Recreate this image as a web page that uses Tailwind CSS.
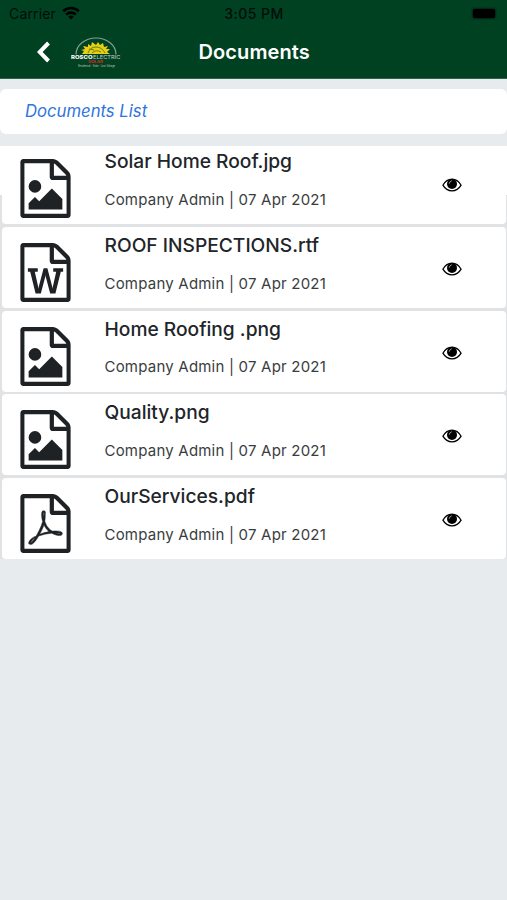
<!DOCTYPE html>
<html lang="en">
<head>
<meta charset="utf-8">
<title>Documents</title>
<script src="https://cdn.jsdelivr.net/npm/@tailwindcss/browser@4"></script>
</head>
<body class="bg-[#e8ebee] w-[507px] h-[900px] overflow-hidden font-[Inter,sans-serif] text-[#212529]">
<svg class="hidden">
  <symbol id="sheet" viewBox="128 0 1536 1792"><path d="M1596 380q28 28 48 76t20 88v1152q0 40-28 68t-68 28h-1344q-40 0-68-28t-28-68v-1600q0-40 28-68t68-28h896q40 0 88 20t76 48zm-444-244v376h376q-10-29-22-41l-313-313q-12-12-41-22zm384 1528v-1024h-416q-40 0-68-28t-28-68v-416h-768v1536h1280z"/></symbol>
  <symbol id="image" viewBox="128 0 1536 1792"><use href="#sheet" x="128" width="1536" height="1792"/><path d="M1408 1216v320h-1024v-192l192-192 128 128 384-384zm-832-192q-80 0-136-56t-56-136 56-136 136-56 136 56 56 136-56 136-136 56z"/></symbol>
  <symbol id="word" viewBox="128 0 1536 1792"><use href="#sheet" x="128" width="1536" height="1792"/><path d="M361 768v107h70l164 661h159l128-485q7-20 10-46 2-16 2-24h4l3 24q1 3 3.500 20t5.500 26l128 485h159l164-661h70v-107h-300v107h90l-99 438q-5 20-7 46l-2 21h-4q0-3-.5-6.500t-1.500-8-1-6.500q-1-5-4-21t-5-25l-144-545h-114l-144 545q-2 9-4.500 24.500t-3.500 21.500l-4 21h-4l-2-21q-2-26-7-46l-99-438h90v-107h-300z"/></symbol>
  <symbol id="pdf" viewBox="128 0 1536 1792"><use href="#sheet" x="128" width="1536" height="1792"/><path stroke="#1e2225" stroke-width="14" d="M1022 1071q33 26 84 56 59-7 117-7 147 0 177 49 16 22 2 52 0 1-1 2l-2 2v1q-6 38-71 38-48 0-115-20t-130-53q-221 24-392 83-153 262-242 262-15 0-28-7l-24-12q-1-1-6-5-10-10-6-36 9-40 56-91.500t132-96.500q14-9 23 6 2 2 2 4 52-85 107-197 68-136 104-262-24-82-30.500-159.500t6.500-127.500q11-40 42-40h22q23 0 35 15 18 21 9 68-2 6-4 8 1 3 1 8v30q-2 123-14 192 55 164 146 238zm-576 411q52-24 137-158-51 40-87.500 84t-49.500 74zm398-920q-15 42-2 132 1-7 7-44 0-3 7-43 1-4 4-8-1-1-1-2-1-2-1-3-1-22-13-36 0 1-1 2v2zm-124 661q135-54 284-81-2-1-13-9.500t-16-13.500q-76-67-127-176-27 86-83 197-30 56-45 83zm646-16q-24-24-140-24 76 28 124 28 14 0 18-1 0-1-2-3z"/></symbol>
  <symbol id="eye" viewBox="0 0 20 14"><path d="M.9 7.200Q4.300 1.100 10 1.100t9.100 6.100Q15.700 12.900 10 12.900T.9 7.200z" fill="none" stroke="#000" stroke-width="1.300"/><circle cx="10" cy="5.900" r="5"/><path d="M7.300 5.300q.3-2 2.100-2.500" fill="none" stroke="#aaa" stroke-width=".9" stroke-linecap="round"/></symbol>
</svg>

<header class="bg-[#004122] h-[79px] border-b border-[#2f6349]">
  <div class="grid grid-cols-3 h-[27px] items-center px-[9px] text-[14px] leading-[27px] text-black/80">
    <div class="flex items-center gap-[6px]"><span class="tracking-[0.150px]">Carrier</span>
      <svg class="w-[18px] h-[14px] -mt-[2px]" viewBox="0 0 18 14" fill="none" stroke="#000" stroke-width="2.600"><path d="M1.200 5.200a11.200 11.200 0 0 1 15.600 0M4.200 8.600a6.900 6.900 0 0 1 9.600 0"/><path d="M9 13.500l-2.600-2.700a3.800 3.800 0 0 1 5.200 0z" fill="#000" stroke="none"/></svg>
    </div>
    <div class="text-center font-medium tracking-[0.450px] text-[14px] pl-px">3:05 PM</div>
    <div class="justify-self-end w-[22px] h-[9px] rounded-[2px] bg-black mr-[3px] -mt-[1px] shadow-[0_0_2px_1px_#00000080]"></div>
  </div>
  <div class="flex items-center h-[51px]">
    <svg class="ml-[37px] w-[13px] h-[22px] -mt-[1px]" viewBox="0 0 13 22" fill="none" stroke="#fff" stroke-width="4"><path d="M11.500 2L2.700 11l8.800 9"/></svg>
    <svg class="ml-[21px] w-[52px] h-[32px]" viewBox="0 0 52 32">
      <path d="M5 17.500A20 16.500 0 0 1 45 17.500" fill="none" stroke="#7d9f98" stroke-width="1.200"/>
      <path d="M11 17l2-3-3-1 4-1-2-3 5 1 0-3 3 2 1-4 4 3 2-3 2 3 3-2 1 4 4-1-2 3 4 0-3 3 3 2z" fill="#e7cf16"/>
      <path d="M17 16q2-6 8-6t9 6M21 16q4-4 9-1M18 12l5 1" fill="none" stroke="#6b7d12" stroke-width="1"/>
      <text y="21.800" font-size="5.200" font-weight="800" fill="#fff" textLength="21.500" lengthAdjust="spacingAndGlyphs">ROSCO</text>
      <text x="22" y="21.800" font-size="5.200" fill="#c5d3cc" textLength="27.500" lengthAdjust="spacingAndGlyphs">ELECTRIC</text>
      <text x="17" y="25.500" font-size="3" font-weight="700" fill="#d32b24" textLength="15" lengthAdjust="spacingAndGlyphs">SOLAR</text>
      <text x="7" y="29.500" font-size="3" fill="#b5c9bf" textLength="37" lengthAdjust="spacingAndGlyphs">Residential - Solar - Low Voltage</text>
    </svg>
    <h1 class="ml-[75.500px] -mt-px text-[20px] tracking-[0.100px] font-semibold text-white">Documents</h1>
  </div>
</header>

<main>
  <div class="mt-[10px] h-[45px] bg-white rounded-[6px] pl-[25px] flex items-center text-[16.700px] italic text-[#2f74dc]">Documents List</div>

  <section class="mt-[12px] bg-[#e1e2e4] relative">
    <div class="absolute inset-x-0 top-0 h-[49px] bg-white"></div>
    <div id="rows" class="relative flex flex-col gap-[2.600px] pl-[2px] pr-px"></div>
  </section>
</main>

<script>
const docs = [
  ["image", "Solar Home Roof.jpg"],
  ["word", "ROOF INSPECTIONS.rtf"],
  ["image", "Home Roofing .png"],
  ["image", "Quality.png"],
  ["pdf", "OurServices.pdf"]
];
document.getElementById("rows").innerHTML = docs.map(([icon, name], i) => `
  <article class="${i ? "h-[81px]" : "h-[78.400px]"} bg-white rounded-[4px] flex items-end">
    <div class="h-[81px] flex flex-1">
      <svg class="ml-[18px] mt-[16px] w-[51px] h-[59px] fill-[#1e2225]"><use href="#${icon}"/></svg>
      <div class="ml-[33.500px] w-[337px]">
        <h2 class="mt-[5.100px] text-[19.200px] leading-[26px] font-medium whitespace-pre">${name}</h2>
        <p class="mt-[13.700px] text-[15px] tracking-[0.210px] leading-[24px] text-[#3a3d40] whitespace-pre">Company Admin | 07 Apr 2021</p>
      </div>
      <svg class="mt-[35px] w-[20px] h-[14px] fill-black"><use href="#eye"/></svg>
    </div>
  </article>`).join("");
</script>
</body>
</html>
